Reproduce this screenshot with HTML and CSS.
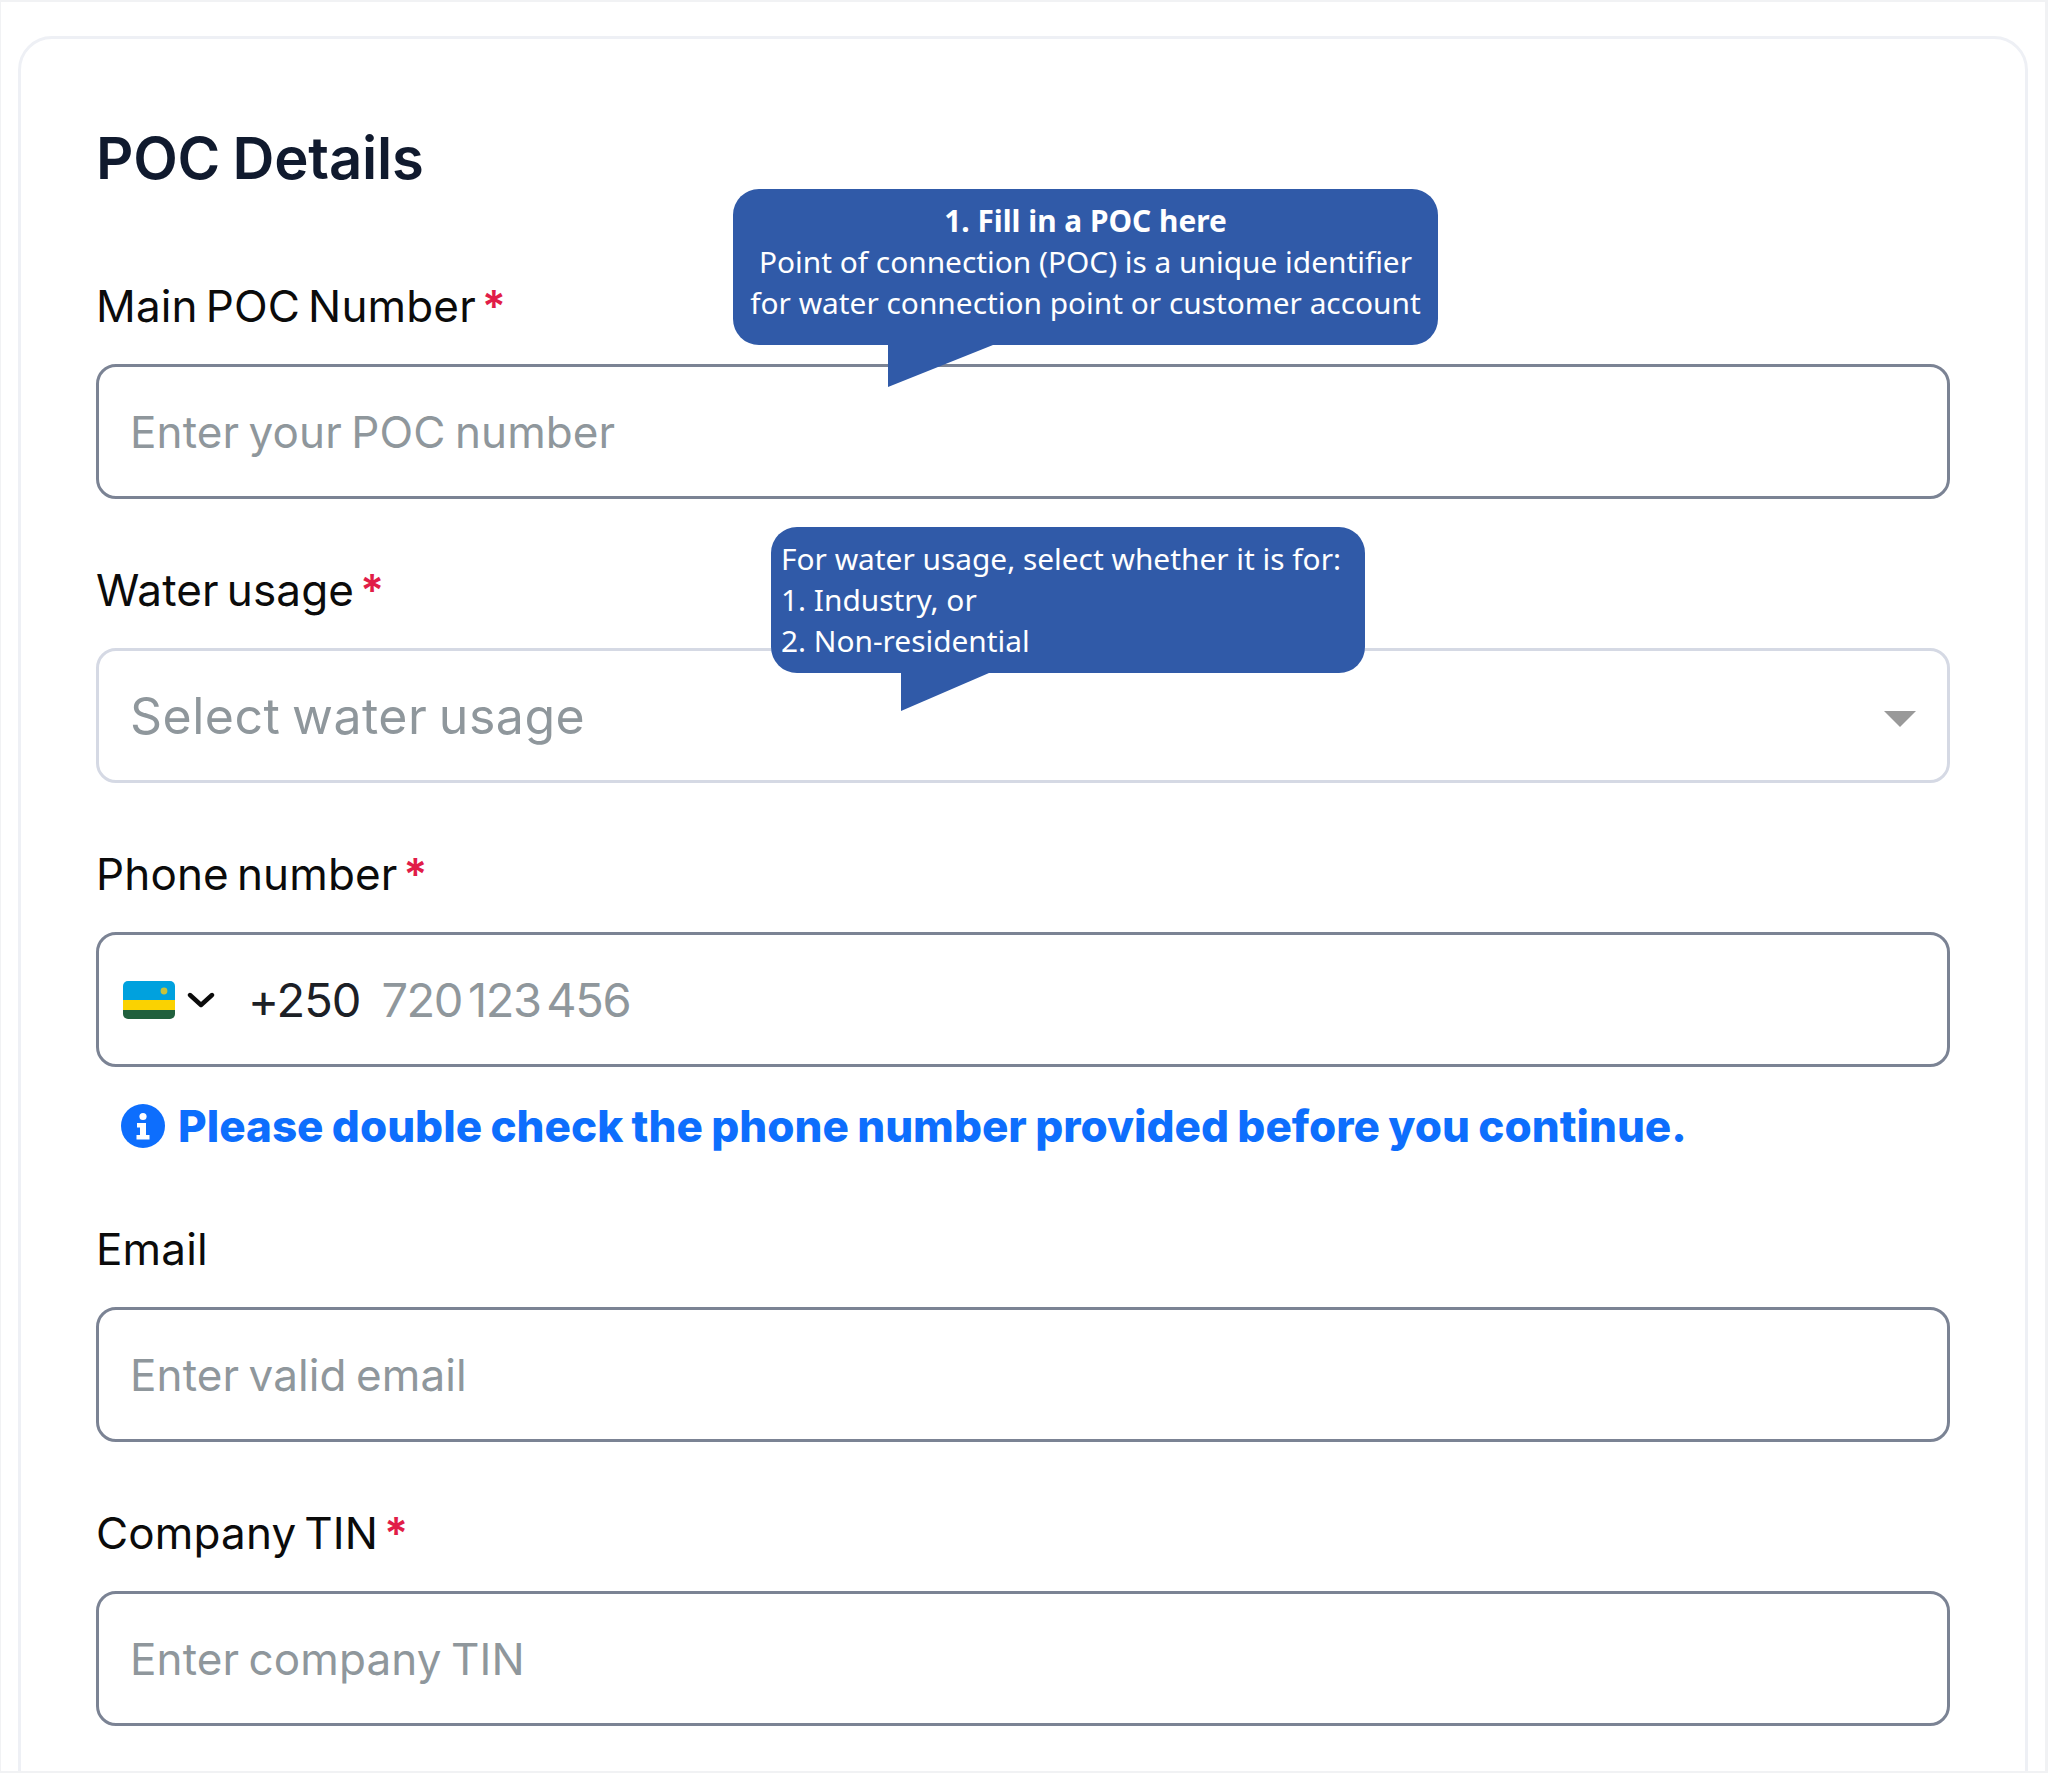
FILE: index.html
```html
<!DOCTYPE html>
<html lang="en">
<head>
    <meta charset="UTF-8">
    <meta name="viewport" content="width=device-width, initial-scale=1.0">
    <title>POC Details</title>
    <link rel="stylesheet" href="styles.css">
</head>
<body>
    <div class="page">
        <form class="card">
            <h1>POC Details</h1>

            <div class="form-group">
                <label for="pocNumber">Main POC Number <span class="required">*</span></label>
                <input type="text" id="pocNumber" class="field" placeholder="Enter your POC number">
                <div class="tip tip-poc">
                    <strong>1. Fill in a POC here</strong><br>
                    Point of connection (POC) is a unique identifier<br>
                    for water connection point or customer account
                </div>
            </div>

            <div class="form-group">
                <label for="waterUsage">Water usage <span class="required">*</span></label>
                <div class="select-wrap">
                    <select id="waterUsage" class="field select-field">
                        <option>Select water usage</option>
                    </select>
                    <span class="select-arrow"></span>
                </div>
                <div class="tip tip-usage">
                    For water usage, select whether it is for:<br>
                    1. Industry, or<br>
                    2. Non-residential
                </div>
            </div>

            <div class="form-group">
                <label for="phone">Phone number <span class="required">*</span></label>
                <div class="field phone-field">
                    <svg class="flag" viewBox="0 0 52 38" aria-hidden="true">
                        <clipPath id="flagClip"><rect width="52" height="38" rx="5"/></clipPath>
                        <g clip-path="url(#flagClip)">
                            <rect width="52" height="19" fill="#00a1de"/>
                            <rect y="19" width="52" height="10" fill="#fad201"/>
                            <rect y="29" width="52" height="9" fill="#20603d"/>
                            <circle cx="41" cy="10" r="3.4" fill="#c9c23a"/>
                        </g>
                    </svg>
                    <svg class="chevron" viewBox="0 0 28 16" aria-hidden="true">
                        <path d="M3 3l11 10L25 3" fill="none" stroke="#0b0b0b" stroke-width="4.4" stroke-linecap="round" stroke-linejoin="round"/>
                    </svg>
                    <span class="dial-code">+250</span>
                    <input type="tel" id="phone" class="phone-input" placeholder="720 123 456">
                </div>
                <p class="phone-note">
                    <svg class="info-icon" viewBox="0 0 44 44" aria-hidden="true">
                        <circle cx="22" cy="22" r="22" fill="#0d6efd"/>
                        <circle cx="22" cy="12.5" r="3.6" fill="#fff"/>
                        <path d="M16 19h9v12h3.500v4.500H15.500V31H19v-7.500h-3z" fill="#fff"/>
                    </svg>
                    Please double check the phone number provided before you continue.
                </p>
            </div>

            <div class="form-group">
                <label for="email">Email</label>
                <input type="email" id="email" class="field" placeholder="Enter valid email">
            </div>

            <div class="form-group">
                <label for="tin">Company TIN <span class="required">*</span></label>
                <input type="text" id="tin" class="field" placeholder="Enter company TIN">
            </div>
        </form>
    </div>
</body>
</html>
```

FILE: styles.css
```css
html, body {
    margin: 0;
    height: 1773px;
    overflow: hidden;
    background: #f1f2f4;
}
body {
    font-family: Inter, 'Noto Sans', sans-serif;
    color: #0b0b0b;
    padding: 2px 3px 2px 1px;
    box-sizing: border-box;
}
.page {
    height: 100%;
    background: #fff;
    padding: 34px 17px 0 17px;
    box-sizing: border-box;
    overflow: hidden;
}
.card {
    border: 3px solid #eef0f5;
    border-radius: 34px;
    padding: 77px 75px 200px 75px;
}
h1 {
    margin: 0 0 75px;
    font-size: 58px;
    font-weight: 600;
    line-height: 84px;
    letter-spacing: -0.2px;
    word-spacing: -2px;
    color: #101a2e;
}
.form-group {
    position: relative;
    margin-bottom: 60px;
}
label {
    display: block;
    height: 60px;
    margin-bottom: 29px;
    font-size: 44px;
    line-height: 62px;
    letter-spacing: 0.15px;
    word-spacing: -4.5px;
}
.required {
    margin-left: -2px;
    color: #e11d48;
    font-weight: 600;
}
.field {
    display: block;
    width: 100%;
    height: 135px;
    padding: 0 31px;
    border: 3px solid #7b8394;
    border-radius: 20px;
    background: #fff;
    box-sizing: border-box;
    font-family: inherit;
    font-size: 44px;
    letter-spacing: 0.1px;
    word-spacing: -3px;
    outline: none;
}
.field::placeholder {
    color: #8f979c;
    opacity: 1;
}
.select-wrap {
    position: relative;
}
.select-field {
    appearance: none;
    border-color: #d5d9e4;
    font-size: 50px;
    letter-spacing: 0.5px;
    word-spacing: -3px;
    color: #8f979c;
}
.select-arrow {
    position: absolute;
    top: 63px;
    right: 34px;
    border-left: 16px solid transparent;
    border-right: 16px solid transparent;
    border-top: 16px solid #999;
}
.phone-field {
    display: flex;
    align-items: center;
    padding: 0 24px;
    font-size: 47px;
    letter-spacing: -1.4px;
    word-spacing: -6px;
}
.flag {
    width: 52px;
    height: 38px;
    flex-shrink: 0;
}
.chevron {
    width: 28px;
    height: 16px;
    margin-left: 12px;
    flex-shrink: 0;
}
.dial-code {
    margin-left: 33px;
    letter-spacing: -1px;
    color: #1c2026;
}
.phone-input {
    flex: 1;
    min-width: 0;
    margin-left: 21px;
    padding: 0;
    border: none;
    outline: none;
    font-family: inherit;
    font-size: inherit;
    letter-spacing: inherit;
    word-spacing: inherit;
}
.phone-input::placeholder {
    color: #8f979c;
    opacity: 1;
}
.phone-note {
    display: flex;
    align-items: center;
    gap: 13px;
    height: 64px;
    margin: 27px 0 0;
    padding-left: 25px;
    font-size: 44px;
    font-weight: 800;
    word-spacing: -1.3px;
    color: #0d6efd;
}
.info-icon {
    width: 44px;
    height: 44px;
    flex-shrink: 0;
}

/* callouts drawn over the form */
.tip {
    position: absolute;
    padding: 0 13px;
    border-radius: 26px;
    background: #305aa8;
    box-sizing: border-box;
    font-family: 'Noto Sans', sans-serif;
    font-size: 29.85px;
    line-height: 41px;
    color: #fff;
    white-space: nowrap;
}
.tip::after {
    content: "";
    position: absolute;
    top: 100%;
    background: #305aa8;
}
.tip-poc {
    left: 637px;
    top: -86px;
    width: 705px;
    height: 156px;
    padding-top: 11px;
    text-align: center;
}
.tip-poc::after {
    left: 155px;
    width: 105px;
    height: 42px;
    clip-path: polygon(0 0, 100% 0, 0 100%);
}
.tip-usage {
    left: 675px;
    top: -32px;
    width: 594px;
    height: 146px;
    padding: 11px 10px 0;
}
.tip-usage::after {
    left: 130px;
    width: 88px;
    height: 38px;
    clip-path: polygon(0 0, 100% 0, 0 100%);
}
```
